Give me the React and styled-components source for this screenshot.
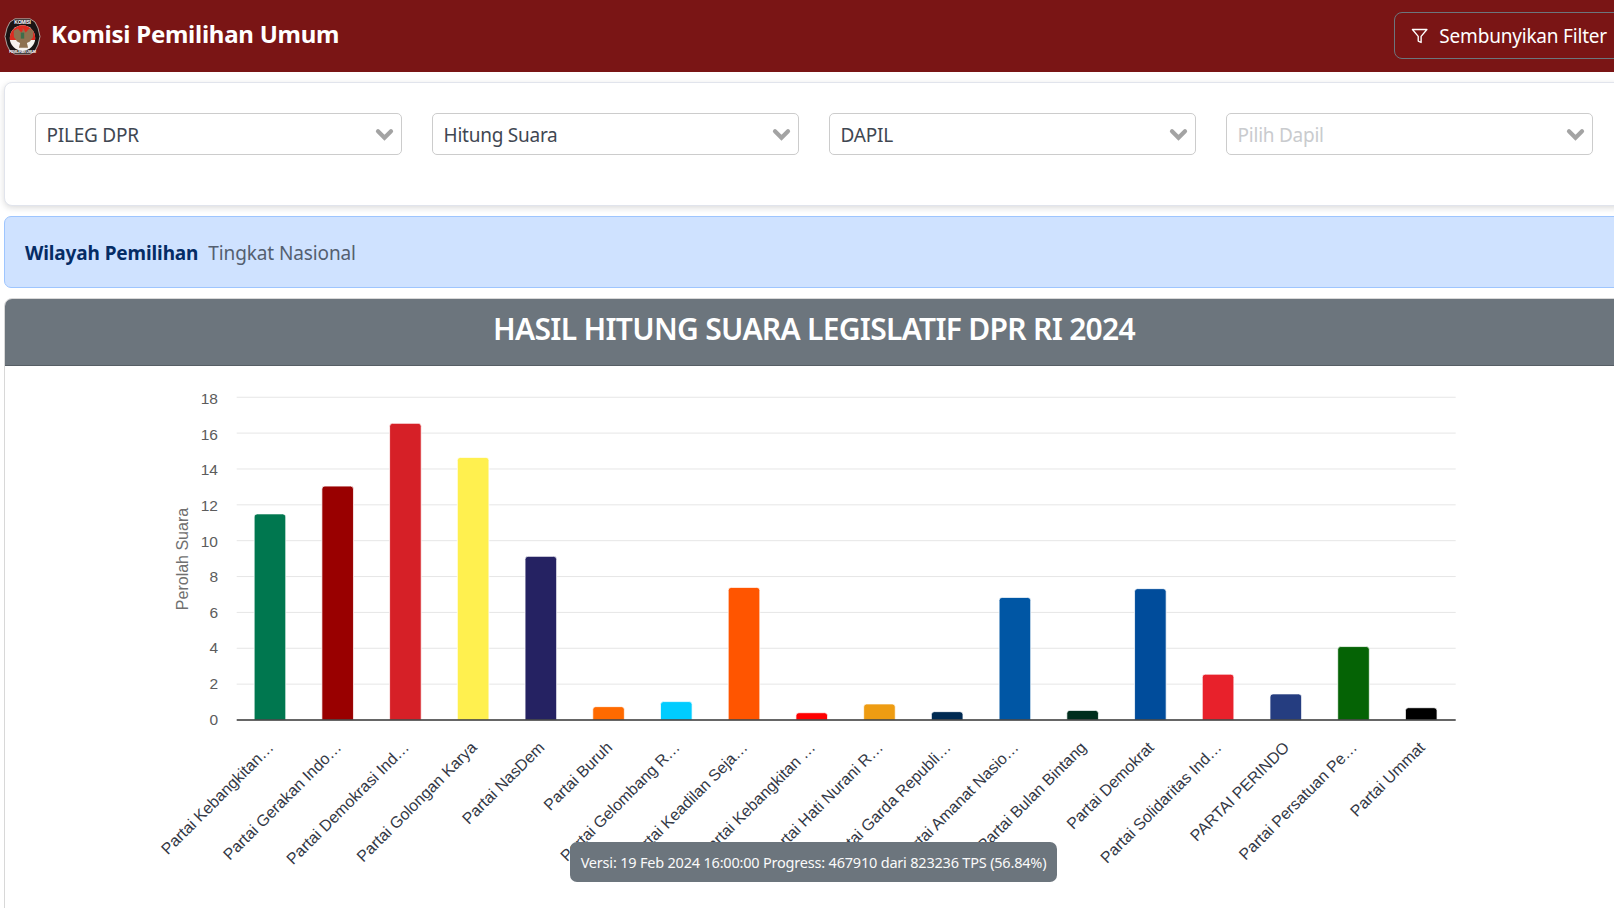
import React from "react";
import styled, { createGlobalStyle } from "styled-components";

const Global = createGlobalStyle`
  html, body { margin: 0; padding: 0; height: 908px; overflow: hidden; background: #fff; }
  body { font-family: "Noto Sans", "Open Sans", sans-serif; }
  * { box-sizing: border-box; }
`;

const Page = styled.div`
  width: 1628px;
  height: 908px;
  overflow: hidden;
`;

const Navbar = styled.header`
  height: 72px;
  background: #7a1515;
  display: flex;
  align-items: center;
  justify-content: space-between;
  padding: 0 4px;
  color: #fff;
`;

const Brand = styled.div`
  display: flex;
  align-items: center;
  gap: 10px;
  font-size: 24px;
  font-weight: 700;
  letter-spacing: -0.25px;
  line-height: 32px;
`;

const BrandName = styled.span`
  padding-bottom: 4px;
`;

const LogoMark = styled.svg`
  display: block;
  margin-top: 1px;
`;

const FilterButton = styled.button`
  display: flex;
  align-items: center;
  gap: 11px;
  height: 47px;
  margin-top: -1px;
  width: 230px;
  padding: 0 16px;
  background: transparent;
  border: 1px solid #6c757d;
  border-radius: 8px;
  color: #fff;
  font: 400 19px "Noto Sans", sans-serif;
  letter-spacing: -0.2px;
  white-space: nowrap;
`;

const Main = styled.main`
  padding: 10px 4px 0;
  display: flex;
  flex-direction: column;
`;

const FilterCard = styled.section`
  height: 124px;
  padding: 30px;
  background: #fff;
  border: 1px solid #e1e4ec;
  border-radius: 8px;
  box-shadow: 0 2px 6px rgba(0, 0, 0, 0.14);
  display: grid;
  grid-template-columns: repeat(4, 1fr);
  column-gap: 30px;
  align-items: start;
`;

const Select = styled.div`
  height: 42px;
  display: flex;
  align-items: center;
  justify-content: space-between;
  padding: 2px 7px 0 10.6px;
  border: 1px solid #cccccc;
  border-radius: 5px;
  background: #fff;
  font-size: 19px;
  letter-spacing: -0.25px;
  color: ${(p) => (p.$placeholder ? "#c9cbce" : "#3f4752")};
`;

const Notice = styled.section`
  height: 72px;
  margin-top: 10px;
  display: flex;
  align-items: center;
  gap: 10px;
  padding: 2px 20px 0;
  background: #cfe2ff;
  border: 1px solid #9ec5fe;
  border-radius: 7px;
  font-size: 19px;
  letter-spacing: -0.12px;
  color: #545f70;
`;

const NoticeStrong = styled.strong`
  color: #052c65;
  font-weight: 700;
`;

const ChartCard = styled.section`
  position: relative;
  margin-top: 10px;
  height: 640px;
  border: 1px solid #d8d8d8;
  border-radius: 8px 8px 0 0;
  overflow: hidden;
`;

const ChartHeader = styled.h2`
  margin: 0;
  height: 67px;
  padding-bottom: 8px;
  display: flex;
  align-items: center;
  justify-content: center;
  background: #6c757d;
  border-bottom: 1px solid #565e65;
  color: #fff;
  font-size: 30px;
  font-weight: 600;
  letter-spacing: -0.7px;
`;

const ChartSvg = styled.svg`
  display: block;
`;

const Tooltip = styled.div`
  position: absolute;
  left: 565px;
  top: 543px;
  width: 487px;
  height: 40px;
  display: flex;
  align-items: center;
  justify-content: center;
  background: #6c757d;
  border-radius: 7px;
  color: #fafafa;
  font-size: 14.5px;
  letter-spacing: -0.2px;
  white-space: nowrap;
`;

const parties = [
  ["Partai Kebangkitan…", 11.44, "#00774f"],
  ["Partai Gerakan Indo…", 12.99, "#990000"],
  ["Partai Demokrasi Ind…", 16.49, "#d62027"],
  ["Partai Golongan Karya", 14.59, "#fff04f"],
  ["Partai NasDem", 9.07, "#252262"],
  ["Partai Buruh", 0.69, "#ff6a00"],
  ["Partai Gelombang R…", 0.97, "#00ccff"],
  ["Partai Keadilan Seja…", 7.34, "#ff5500"],
  ["Partai Kebangkitan …", 0.35, "#ff0000"],
  ["Partai Hati Nurani R…", 0.84, "#ee9c12"],
  ["Partai Garda Republi…", 0.41, "#002a52"],
  ["Partai Amanat Nasio…", 6.78, "#0056a4"],
  ["Partai Bulan Bintang", 0.48, "#002e1d"],
  ["Partai Demokrat", 7.27, "#004c9b"],
  ["Partai Solidaritas Ind…", 2.5, "#e8212b"],
  ["PARTAI PERINDO", 1.4, "#253d80"],
  ["Partai Persatuan Pe…", 4.04, "#056305"],
  ["Partai Ummat", 0.63, "#000000"],
];

const AXIS_LEFT = 236.7;
const AXIS_RIGHT = 1455.7;
const BASE = 720;
const UNIT = 17.93;
const STEP = (AXIS_RIGHT - AXIS_LEFT) / 18;
const BAR = 31.6;
const BAR_SHIFT = -0.6;

const Chevron = () => (
  <svg width="20" height="14" viewBox="0 0 20 14" fill="none">
    <path d="M4 3.2l6.5 6.5L17 3.2" stroke="#a3a3a3" strokeWidth="4.2" strokeLinecap="round" strokeLinejoin="miter" />
  </svg>
);

const FunnelIcon = () => (
  <svg width="22" height="22" viewBox="0 0 24 24" fill="none" stroke="#fff" strokeWidth="1.9" strokeLinejoin="round" strokeLinecap="round">
    <polygon points="22 3 2 3 10 12.46 10 19 14 21 14 12.46 22 3" />
  </svg>
);

const Logo = () => (
  <LogoMark width="37" height="37" viewBox="0 0 37 37">
    <path d="M11 0.8h15l5 3.2 3 6 2 8.5-2 8.5-3 6-5 3.2H11l-5-3.2-3-6-2-8.5 2-8.5 3-6z" fill="#1a1414" stroke="#c9c5c0" strokeWidth="0.8" />
    <circle cx="18.5" cy="20" r="12.7" fill="#f6f2ee" />
    <path d="M5.96 22A12.7 12.7 0 1 1 31.04 22z" fill="#dc2a20" />
    <path d="M18.5 9.5l1.6 2.6 1.6 2.4 3.6-4 4 2.2-.2 6.4-3.2 4.4-3 1.6 1.2 4.6h-9.2l1.2-4.6-3-1.6-3.2-4.4-.2-6.4 4-2.2 3.6 4 1.6-2.4z" fill="#8e7150" />
    <rect x="16.8" y="14.6" width="3.4" height="6" fill="#3c6e4a" />
    <text x="18.5" y="6.2" textAnchor="middle" fontFamily="Liberation Sans, sans-serif" fontSize="5" fontWeight="700" fill="#fff">KOMISI</text>
    <text x="18.5" y="35" textAnchor="middle" fontFamily="Liberation Sans, sans-serif" fontSize="3.4" fontWeight="700" fill="#fff">PEMILIHAN UMUM</text>
  </LogoMark>
);

const Chart = () => (
  <ChartSvg width="1617" height="542" viewBox="5 366 1617 542">
    {Array.from({ length: 9 }, (_, i) => (i + 1) * 2).map((v) => (
      <line key={v} x1={AXIS_LEFT} x2={AXIS_RIGHT} y1={BASE - v * UNIT} y2={BASE - v * UNIT} stroke="#e6e6e6" strokeWidth="1" />
    ))}
    {Array.from({ length: 10 }, (_, i) => i * 2).map((v) => (
      <text key={v} x="218" y={724.5 - v * 17.8} textAnchor="end" fontFamily="Liberation Sans, sans-serif" fontSize="15.5" fill="#5c5c5c">
        {v}
      </text>
    ))}
    <text transform="translate(187.5 559) rotate(-90)" textAnchor="middle" fontFamily="Liberation Sans, sans-serif" fontSize="16" fill="#707070">
      Perolah Suara
    </text>
    {parties.map(([name, value, color], i) => {
      const cx = AXIS_LEFT + STEP * (i + 0.5) + BAR_SHIFT;
      const h = value * UNIT + 1;
      return (
        <path
          key={name}
          d={`M${cx - BAR / 2} ${BASE}V${BASE - h + 3}q0 -3 3 -3H${cx + BAR / 2 - 3}q3 0 3 3V${BASE}z`}
          fill={color}
          stroke="#fff"
          strokeOpacity="0.75"
          strokeWidth="1"
        />
      );
    })}
    <line x1={AXIS_LEFT} x2={AXIS_RIGHT} y1={BASE} y2={BASE} stroke="#333" strokeWidth="1.3" />
    {parties.map(([name], i) => {
      const cx = AXIS_LEFT + STEP * (i + 0.5);
      return (
        <text
          key={name}
          transform={`translate(${cx + 4} 748.5) rotate(-45)`}
          textAnchor="end"
          fontFamily="Liberation Sans, sans-serif"
          fontSize="16"
          fill="#333845"
        >
          {name}
        </text>
      );
    })}
  </ChartSvg>
);

export default function App() {
  return (
    <Page>
      <Global />
      <Navbar>
        <Brand>
          <Logo />
          <BrandName>Komisi Pemilihan Umum</BrandName>
        </Brand>
        <FilterButton>
          <FunnelIcon />
          Sembunyikan Filter
        </FilterButton>
      </Navbar>
      <Main>
        <FilterCard>
          <Select>PILEG DPR<Chevron /></Select>
          <Select>Hitung Suara<Chevron /></Select>
          <Select>DAPIL<Chevron /></Select>
          <Select $placeholder>Pilih Dapil<Chevron /></Select>
        </FilterCard>
        <Notice>
          <NoticeStrong>Wilayah Pemilihan</NoticeStrong>
          Tingkat Nasional
        </Notice>
        <ChartCard>
          <ChartHeader>HASIL HITUNG SUARA LEGISLATIF DPR RI 2024</ChartHeader>
          <Chart />
          <Tooltip>Versi: 19 Feb 2024 16:00:00 Progress: 467910 dari 823236 TPS (56.84%)</Tooltip>
        </ChartCard>
      </Main>
    </Page>
  );
}
